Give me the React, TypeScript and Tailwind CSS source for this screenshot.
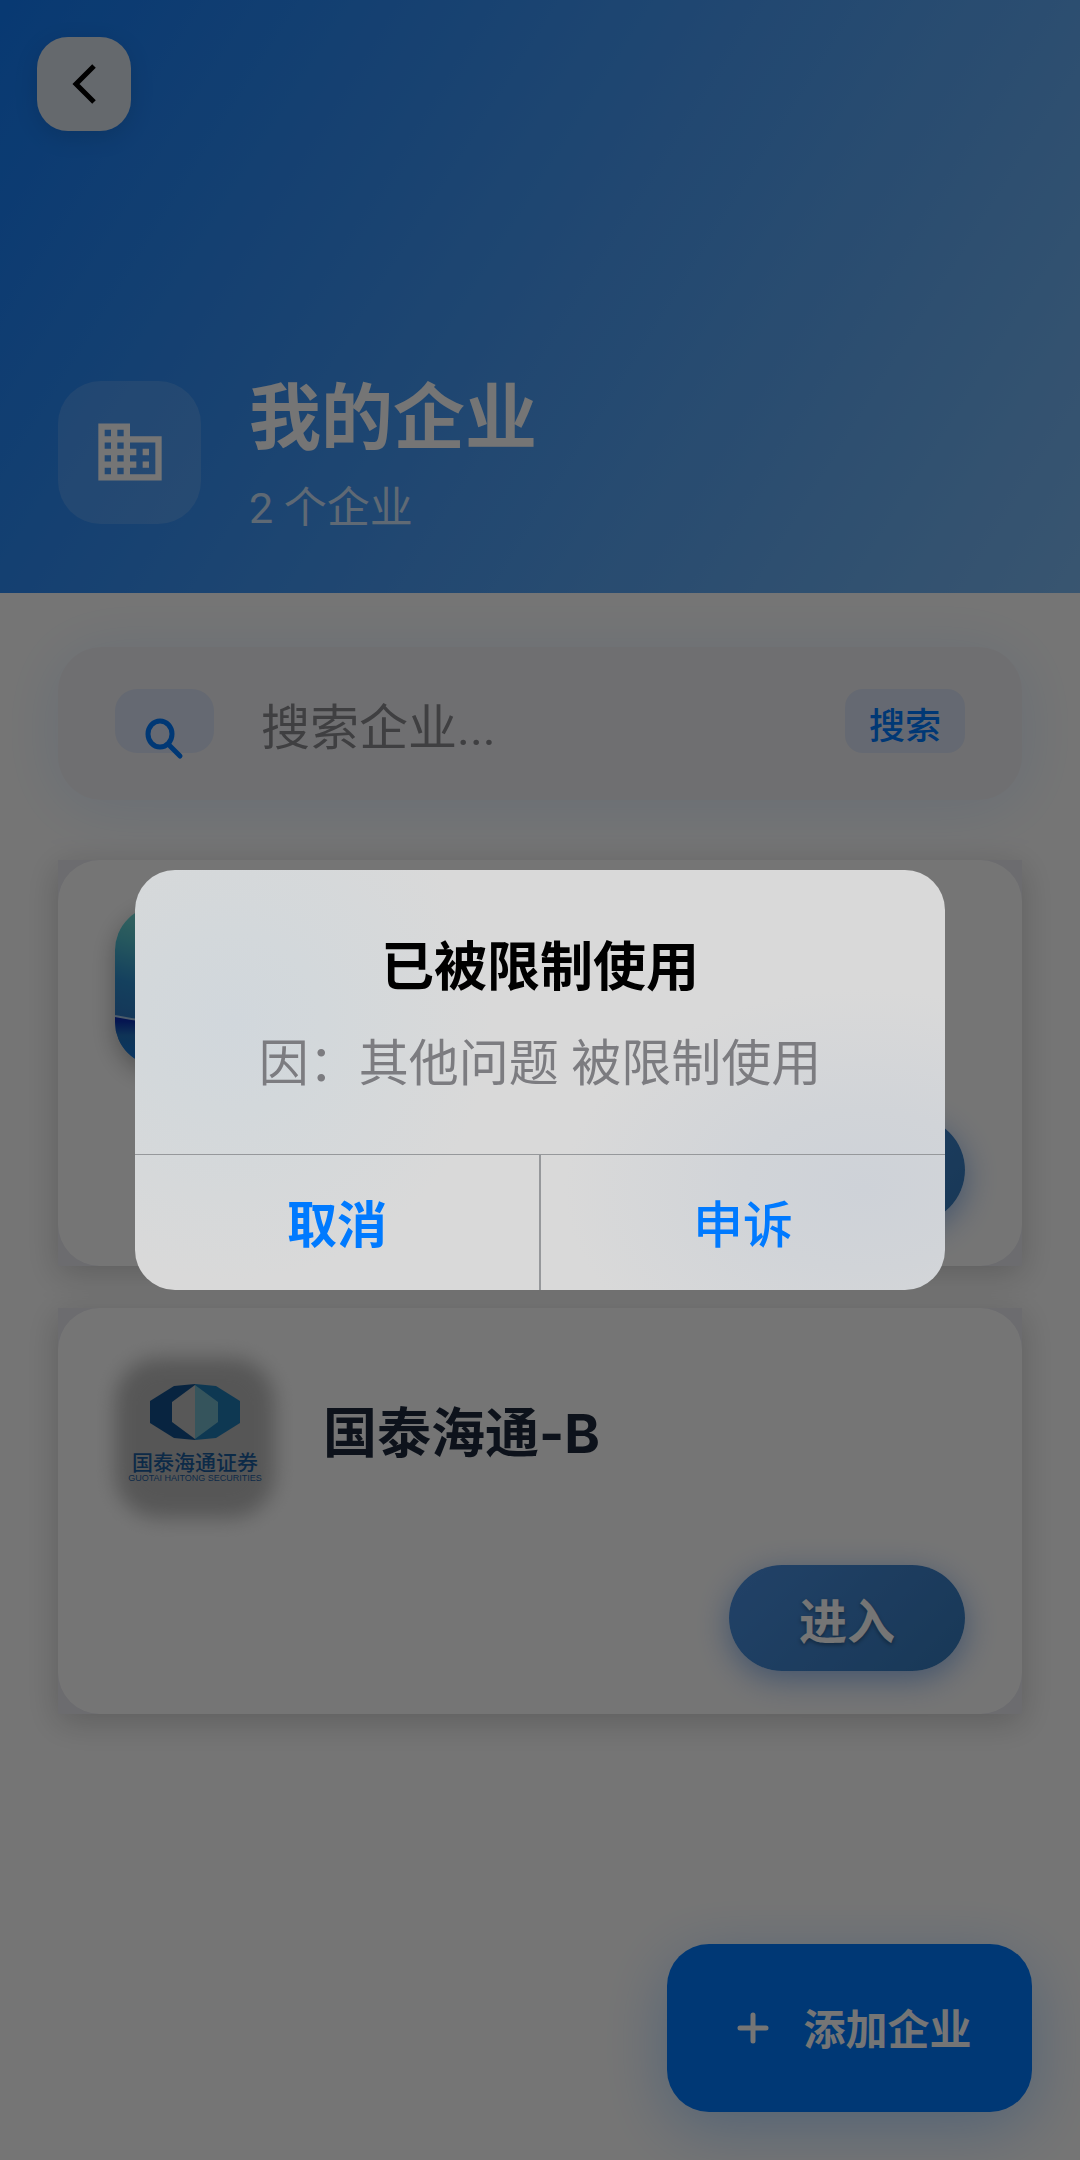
import type { ReactNode } from "react";
import { MdBusiness } from "react-icons/md";

function BackIcon() {
  return (
    <svg viewBox="0 0 24 40" className="h-10 w-6" fill="none" stroke="#000" strokeWidth="5" aria-hidden="true">
      <path d="M22 2 4 20 22 38" />
    </svg>
  );
}

function SearchIcon() {
  return (
    <svg viewBox="0 0 38 40" className="h-10 w-[38px] overflow-visible" fill="none" stroke="#007aff" strokeWidth="5" strokeLinecap="round" aria-hidden="true">
      <ellipse cx="14" cy="15" rx="12" ry="13" />
      <path d="M24 27 34 37" />
    </svg>
  );
}

function PlusIcon() {
  return (
    <svg viewBox="0 0 32 32" className="size-8" stroke="#fff" strokeWidth="5" strokeLinecap="round" aria-hidden="true">
      <path d="M16 3V29M3 16H29" />
    </svg>
  );
}

function WaveLogo() {
  return (
    <svg viewBox="0 0 160 160" className="size-40 rounded-[44px] shadow-[0_8px_24px_rgba(0,0,0,0.3)]" aria-hidden="true">
      <defs>
        <linearGradient id="sky" x1="0.3" y1="0" x2="0" y2="1">
          <stop offset="0" stopColor="#80e0d4" />
          <stop offset="0.25" stopColor="#54c0cc" />
          <stop offset="0.5" stopColor="#2c8ccc" />
          <stop offset="0.75" stopColor="#2e74c0" />
        </linearGradient>
        <linearGradient id="sea" x1="0" y1="0" x2="0" y2="1">
          <stop offset="0" stopColor="#0820b8" />
          <stop offset="0.2" stopColor="#0c30b0" />
          <stop offset="0.45" stopColor="#2070bc" />
          <stop offset="1" stopColor="#1478dc" />
        </linearGradient>
      </defs>
      <rect width="160" height="160" fill="url(#sky)" />
      <path d="M0 110C20 114 60 124 160 104V160H0Z" fill="url(#sea)" />
      <path d="M0 110C20 114 60 124 160 104" fill="none" stroke="#a8c8e8" strokeWidth="2" />
    </svg>
  );
}

function SecuritiesLogo() {
  return (
    <div className="relative size-40">
      <div className="absolute inset-x-0 top-1 -bottom-1 rounded-[44px] bg-[#bcbcbc] blur-[10px]" />
      <div className="relative flex flex-col items-center pt-[30px]">
        <svg viewBox="0 0 90 56" className="h-14 w-[90px]" aria-hidden="true">
          <path d="M0 17 24 2 45 0V56L24 54 0 39Z" fill="#12508c" />
          <path d="M90 17 66 2 45 0V56L66 54 90 39Z" fill="#1f7ab4" />
          <path d="M45 1 22 18V38L45 55Z" fill="#bfbfbf" />
          <path d="M45 1 68 18V38L45 55Z" fill="#74b8c8" />
        </svg>
        <span className="mt-3 text-[21px] leading-[22px] font-medium whitespace-nowrap text-[#1c5c9c]">国泰海通证券</span>
        <span className="font-['Liberation_Sans'] text-[9px] leading-2 whitespace-nowrap text-[#1c5c9c]">GUOTAI HAITONG SECURITIES</span>
      </div>
    </div>
  );
}

function CompanyCard({ logo, name }: { logo: ReactNode; name?: string }) {
  return (
    <li className="bg-[#ebebf2] shadow-[0_8px_32px_rgba(0,0,0,0.2)]">
      <article className="flex h-[406px] flex-col justify-between rounded-[42px] bg-white px-[57px] pt-[46px] pb-[43px]">
        <div className="flex items-center gap-12">
          {logo}
          {name && (
            <h2 className="font-['Inter','Noto_Sans_CJK_SC',sans-serif] text-[54px] leading-[72px] font-bold text-[#1e293b]">
              {name}
            </h2>
          )}
        </div>
        <button
          type="button"
          className="h-[106px] w-[236px] self-end rounded-full bg-linear-[135deg] from-[#4a90e2] to-[#357abd] pt-2.5 text-[48px] font-bold text-white shadow-[0_8px_32px_rgba(53,122,220,0.55)] [text-shadow:0_2px_4px_rgba(0,0,0,0.35)]"
        >
          进入
        </button>
      </article>
    </li>
  );
}

export default function App() {
  return (
    <div lang="zh-CN" className="relative flex min-h-screen flex-col bg-white font-['Roboto','Noto_Sans_CJK_SC',sans-serif]">
      <header className="flex h-[593px] flex-col justify-between bg-linear-[122deg] from-[#127cf8] to-[#7cbaf4] px-[58px] pt-[37px] pb-[53px]">
        <button
          type="button"
          aria-label="返回"
          className="-ml-[21px] flex size-[94px] items-center justify-center rounded-[31px] bg-[#dce4ee] shadow-[0_6px_24px_rgba(0,0,0,0.12)]"
        >
          <BackIcon />
        </button>
        <div className="flex items-center gap-12">
          <div className="flex size-[143px] items-center justify-center rounded-[43px] bg-white/15">
            <MdBusiness className="size-[76px] text-white" />
          </div>
          <div className="flex flex-col gap-[14px] pt-3">
            <h1 className="text-[72px] leading-[86px] font-bold text-white">我的企业</h1>
            <p className="text-[43px] leading-[64px] text-white/75">2 个企业</p>
          </div>
        </div>
      </header>

      <main className="flex flex-col px-[58px] pt-[54px]">
        <form className="flex h-[153px] items-start rounded-[44px] bg-[#f2f2f6] px-[57px] pt-[42px] shadow-[0_6px_64px_rgba(0,122,255,0.12)]">
          <label htmlFor="search" aria-label="搜索企业" className="flex h-16 w-[99px] shrink-0 items-start justify-center rounded-[22px] bg-[#dce5f8] pt-[30px]">
            <SearchIcon />
          </label>
          <input
            id="search"
            type="text"
            placeholder="搜索企业..."
            className="ml-[47px] h-[78px] min-w-0 flex-1 text-[49px] outline-none placeholder:text-[#8a8a8e]"
          />
          <button type="button" className="h-16 w-[120px] rounded-[18px] bg-[#dce5f8] pt-3 text-[36px] leading-[52px] font-medium text-[#007aff]">
            搜索
          </button>
        </form>
        <ul className="mt-[60px] flex flex-col gap-[42px]">
          <CompanyCard logo={<WaveLogo />} />
          <CompanyCard logo={<SecuritiesLogo />} name="国泰海通-B" />
        </ul>
      </main>

      <button
        type="button"
        className="absolute right-12 bottom-12 flex h-[168px] w-[365px] items-center justify-center gap-[34px] rounded-[42px] bg-[#007aff] pl-[10px] text-[42px] font-bold text-white shadow-[0_16px_64px_rgba(0,122,255,0.3)]"
      >
        <PlusIcon />
        <span className="pt-1">添加企业</span>
      </button>

      <div className="absolute inset-0 flex items-center justify-center bg-black/54">
        <div
          role="alertdialog"
          aria-labelledby="dialog-title"
          aria-describedby="dialog-text"
          className="w-3/4 overflow-hidden rounded-[40px] bg-[#d9d9d9] bg-[radial-gradient(circle_at_12%_36%,#d1d7dc_0px,#d3d8db_90px,transparent_260px),radial-gradient(ellipse_300px_200px_at_90%_76%,#ced2d8_0%,#d1d4d8_40%,transparent_100%)]"
        >
          <div className="flex h-[284px] flex-col items-center pt-[58px]">
            <h2 id="dialog-title" className="text-[53px] leading-[80px] font-bold text-black">已被限制使用</h2>
            <p id="dialog-text" className="mt-5 text-[50px] leading-[72px] text-[#7c7c80]">因：其他问题 被限制使用</p>
          </div>
          <div className="flex h-[136px] border-t border-[#96989b] text-[50px] text-[#007aff]">
            <button type="button" className="flex-1 border-r-2 border-[#96989b] pt-2 font-bold">取消</button>
            <button type="button" className="flex-1 pt-2 font-medium">申诉</button>
          </div>
        </div>
      </div>
    </div>
  );
}
